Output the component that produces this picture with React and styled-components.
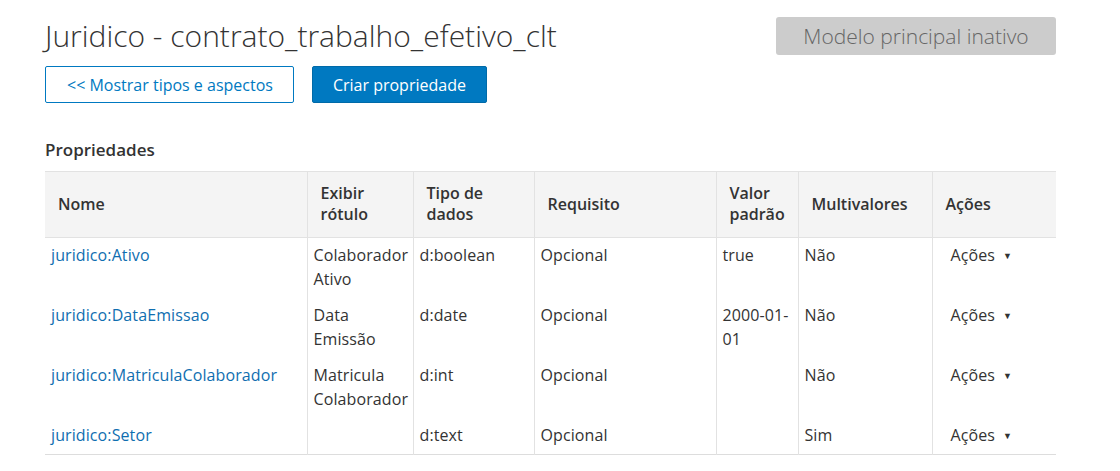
import React from "react";
import styled, { createGlobalStyle } from "styled-components";

const GlobalStyle = createGlobalStyle`
  body {
    margin: 0;
    background: #fff;
    font-family: "Open Sans", "Liberation Sans", sans-serif;
    color: #333;
  }
`;

const Page = styled.div`
  width: 1011px;
  padding: 17px 0 0 45px;
`;

const TitleRow = styled.div`
  display: flex;
  justify-content: space-between;
  align-items: flex-start;
`;

const Title = styled.h1`
  margin: 0;
  font-size: 30px;
  font-weight: 300;
  line-height: 38px;
  color: #333;
`;

const InactiveBadge = styled.div`
  width: 280px;
  height: 38px;
  box-sizing: border-box;
  background: #ccc;
  border-radius: 3px;
  color: #666;
  font-size: 21px;
  font-weight: 300;
  display: flex;
  align-items: center;
  justify-content: center;
`;

const ButtonRow = styled.div`
  display: flex;
  gap: 18px;
  margin-top: 11px;
`;

const Button = styled.button`
  height: 37px;
  box-sizing: border-box;
  padding: ${(p) => (p.primary ? "0 20px" : "0 20px 0 21px")};
  font-family: inherit;
  font-size: 16px;
  border-radius: 2px;
  border: 1px solid ${(p) => (p.primary ? "#006aa8" : "#0079c1")};
  background: ${(p) => (p.primary ? "#0079c1" : "#fff")};
  color: ${(p) => (p.primary ? "#fff" : "#0079c1")};
  cursor: pointer;
`;

const SectionTitle = styled.h2`
  margin: 35px 0 0;
  font-size: 17px;
  font-weight: 600;
  line-height: 24px;
`;

const Table = styled.table`
  margin-top: 9px;
  width: 1011px;
  table-layout: fixed;
  border-collapse: collapse;
  font-size: 16px;
  letter-spacing: 0.1px;
  border-bottom: 1px solid #ddd;
`;

const Th = styled.th`
  background: #f4f4f4;
  border: 1px solid #e2e2e2;
  border-left: ${(p) => (p.first ? "none" : "1px solid #e2e2e2")};
  border-right: none;
  padding: 11px 12px 12px 13px;
  height: 65px;
  box-sizing: border-box;
  text-align: left;
  font-weight: 600;
  font-size: 16px;
  line-height: 21px;
  letter-spacing: 0;
  color: #333;
`;

const Td = styled.td`
  vertical-align: top;
  padding: 5px 5px 7px 6px;
  line-height: 24px;
  border-left: ${(p) => (p.first ? "none" : "1px solid #e2e2e2")};
  color: #333;
`;

const NameLink = styled.a`
  color: #0f6eb0;
  text-decoration: none;
`;

const ActionsToggle = styled.span`
  display: inline-flex;
  align-items: center;
  gap: 8px;
  padding-left: 12px;
  color: #333;
`;

const Caret = styled.span`
  font-size: 9px;
  line-height: 1;
`;

const columns = [
  { label: "Nome", width: 262 },
  { label: ["Exibir", "rótulo"], width: 106 },
  { label: ["Tipo de", "dados"], width: 121 },
  { label: "Requisito", width: 182 },
  { label: ["Valor", "padrão"], width: 82 },
  { label: "Multivalores", width: 134 },
  { label: "Ações", width: 124 },
];

const rows = [
  { name: "juridico:Ativo", label: ["Colaborador", "Ativo"], type: "d:boolean", req: "Opcional", def: ["true"], multi: "Não" },
  { name: "juridico:DataEmissao", label: ["Data", "Emissão"], type: "d:date", req: "Opcional", def: ["2000-01-", "01"], multi: "Não" },
  { name: "juridico:MatriculaColaborador", label: ["Matricula", "Colaborador"], type: "d:int", req: "Opcional", def: [], multi: "Não" },
  { name: "juridico:Setor", label: [], type: "d:text", req: "Opcional", def: [], multi: "Sim" },
];

const Lines = ({ parts }) =>
  parts.map((p, i) => (
    <React.Fragment key={i}>
      {i > 0 && <br />}
      {p}
    </React.Fragment>
  ));

const App = () => {
  return (
    <Page>
      <GlobalStyle />
      <TitleRow>
        <Title>Juridico - contrato_trabalho_efetivo_clt</Title>
        <InactiveBadge>Modelo principal inativo</InactiveBadge>
      </TitleRow>
      <ButtonRow>
        <Button>&lt;&lt; Mostrar tipos e aspectos</Button>
        <Button primary>Criar propriedade</Button>
      </ButtonRow>
      <SectionTitle>Propriedades</SectionTitle>
      <Table>
        <colgroup>
          {columns.map((c, i) => (
            <col key={i} style={{ width: c.width }} />
          ))}
        </colgroup>
        <thead>
          <tr>
            {columns.map((c, i) => (
              <Th key={i} first={i === 0}>
                {Array.isArray(c.label) ? <Lines parts={c.label} /> : c.label}
              </Th>
            ))}
          </tr>
        </thead>
        <tbody>
          {rows.map((r) => (
            <tr key={r.name}>
              <Td first>
                <NameLink href="#">{r.name}</NameLink>
              </Td>
              <Td>
                <Lines parts={r.label} />
              </Td>
              <Td>{r.type}</Td>
              <Td>{r.req}</Td>
              <Td>
                <Lines parts={r.def} />
              </Td>
              <Td>{r.multi}</Td>
              <Td>
                <ActionsToggle>
                  Ações <Caret>▼</Caret>
                </ActionsToggle>
              </Td>
            </tr>
          ))}
        </tbody>
      </Table>
    </Page>
  );
};

export default App;
